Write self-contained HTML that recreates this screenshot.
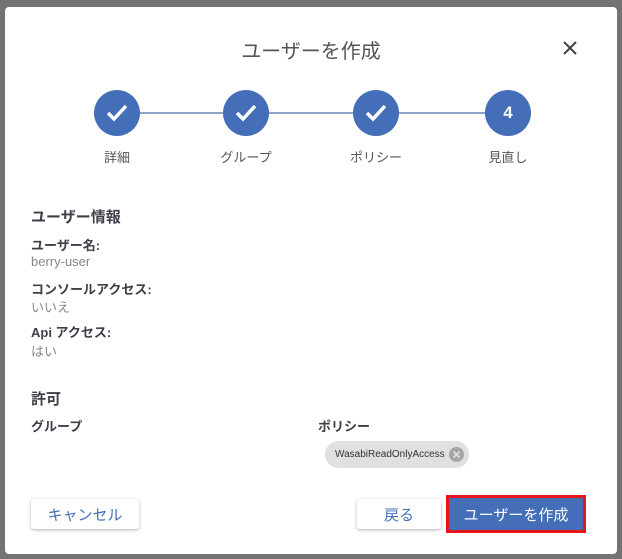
<!DOCTYPE html>
<html><head><meta charset="utf-8"><style>
*{margin:0;padding:0;box-sizing:border-box}
body{width:622px;height:559px;background:#737373;position:relative;overflow:hidden;font-family:"Liberation Sans","Noto Sans CJK JP",sans-serif}
.dlg{position:absolute;left:5px;top:7px;width:612px;height:547px;background:#fff;border-radius:4px}
.a{position:absolute;white-space:nowrap}
.c{position:absolute;width:46px;height:46px;border-radius:50%;background:#446fb8;top:90px;color:#fff;display:flex;align-items:center;justify-content:center;font-size:17px;font-weight:bold}
.lab{position:absolute;top:147px;font-size:13px;color:#555;width:100px;text-align:center}
.k{font-size:13px;font-weight:bold;color:#3d4048}
.v{font-size:13px;color:#888}
.btn{position:absolute;background:#fff;border-radius:3px;box-shadow:0 1px 3px rgba(0,0,0,.3);color:#446fb8;font-size:15px;display:flex;align-items:center;justify-content:center}
</style></head><body>
<div class="dlg"></div>
<div class="a" style="left:0;width:622px;text-align:center;top:35px;font-size:20px;color:#555">ユーザーを作成</div>
<svg class="a" style="left:563px;top:41px" width="14" height="14"><path d="M1 1L13 13M13 1L1 13" stroke="#444" stroke-width="2"/></svg>
<div class="a" style="left:117px;top:112px;width:391px;height:2px;background:#8fa4c8"></div>
<div class="c" style="left:94px"><svg width="24" height="20"><path d="M3 10l6 6L21 3" stroke="#fff" stroke-width="3.5" fill="none"/></svg></div>
<div class="c" style="left:223px"><svg width="24" height="20"><path d="M3 10l6 6L21 3" stroke="#fff" stroke-width="3.5" fill="none"/></svg></div>
<div class="c" style="left:353px"><svg width="24" height="20"><path d="M3 10l6 6L21 3" stroke="#fff" stroke-width="3.5" fill="none"/></svg></div>
<div class="c" style="left:485px">4</div>
<div class="lab" style="left:67px">詳細</div>
<div class="lab" style="left:196px">グループ</div>
<div class="lab" style="left:326px">ポリシー</div>
<div class="lab" style="left:458px">見直し</div>
<div class="a" style="left:31px;top:206px;font-size:15px;font-weight:bold;color:#3d4048">ユーザー情報</div>
<div class="a k" style="left:31px;top:235px">ユーザー名:</div>
<div class="a v" style="left:31px;top:254px">berry-user</div>
<div class="a k" style="left:31px;top:279px">コンソールアクセス:</div>
<div class="a v" style="left:31px;top:297px">いいえ</div>
<div class="a k" style="left:31px;top:322px">Api アクセス:</div>
<div class="a v" style="left:31px;top:341px">はい</div>
<div class="a" style="left:31px;top:388px;font-size:15px;font-weight:bold;color:#3d4048">許可</div>
<div class="a k" style="left:31px;top:416px">グループ</div>
<div class="a k" style="left:318px;top:416px">ポリシー</div>
<div class="a" style="left:325px;top:441px;width:144px;height:27px;border-radius:14px;background:#e0e0e0;font-size:10px;color:#333;padding-left:10px;line-height:27px">WasabiReadOnlyAccess
<span style="position:absolute;right:5px;top:6px;width:15px;height:15px;border-radius:50%;background:#a6a6a6"><svg width="15" height="15" style="position:absolute;left:0;top:0"><path d="M4.5 4.5l6 6M10.5 4.5l-6 6" stroke="#e0e0e0" stroke-width="1.8"/></svg></span></div>
<div class="btn" style="left:31px;top:499px;width:108px;height:30px">キャンセル</div>
<div class="btn" style="left:357px;top:499px;width:84px;height:30px">戻る</div>
<div class="a" style="left:446px;top:495px;width:140px;height:38px;border:3px solid #e8141c;background:#446fb8;color:#fff;font-size:15px;display:flex;align-items:center;justify-content:center">ユーザーを作成</div>
</body></html>
